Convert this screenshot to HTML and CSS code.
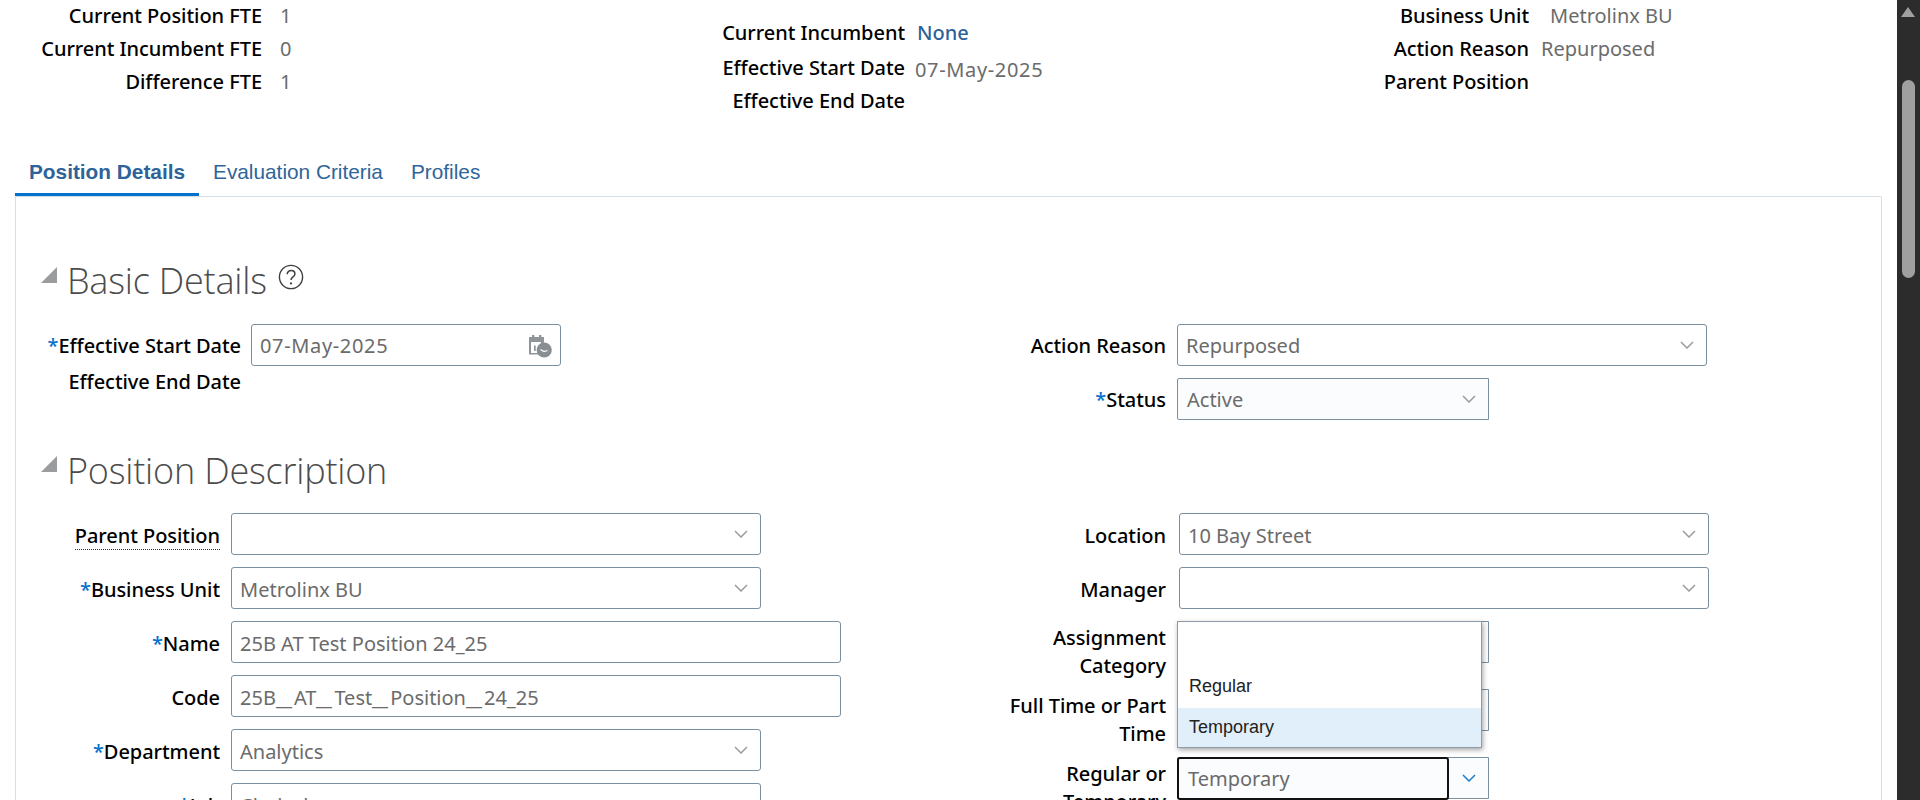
FILE: index.html
```html
<!DOCTYPE html>
<html lang="en">
  <head>
    <meta charset="UTF-8" />
    <title>Position Details</title>
    <link rel="stylesheet" href="styles.css">
  </head>
  <body>
    <svg class="defs" width="0" height="0">
      <symbol id="chevron" viewBox="0 0 14 8">
        <path d="M1 1l6 6 6-6" fill="none" stroke="currentColor" stroke-width="1.5" />
      </symbol>
      <symbol id="collapse" viewBox="0 0 16 16">
        <path d="M16 0v16H0z" fill="#9a9c9e" />
      </symbol>
    </svg>
    <div class="app">
      <div class="main">
        <div class="summary">
          <div class="summary-col col-fte">
            <div class="sum-row"><span class="sum-label">Current Position FTE</span><span class="sum-value">1</span></div>
            <div class="sum-row"><span class="sum-label">Current Incumbent FTE</span><span class="sum-value">0</span></div>
            <div class="sum-row"><span class="sum-label">Difference FTE</span><span class="sum-value">1</span></div>
          </div>
          <div class="summary-col col-dates">
            <div class="sum-row"><span class="sum-label">Current Incumbent</span><a class="sum-link" href="#">None</a></div>
            <div class="sum-row row-date"><span class="sum-label">Effective Start Date</span><span class="sum-value date-value">07-May-2025</span></div>
            <div class="sum-row"><span class="sum-label">Effective End Date</span></div>
          </div>
          <div class="summary-col col-unit">
            <div class="sum-row"><span class="sum-label">Business Unit</span><span class="sum-value unit-value">Metrolinx BU</span></div>
            <div class="sum-row"><span class="sum-label">Action Reason</span><span class="sum-value">Repurposed</span></div>
            <div class="sum-row"><span class="sum-label">Parent Position</span></div>
          </div>
        </div>

        <div class="tabs">
          <a class="tab active" href="#">Position Details</a>
          <a class="tab" href="#">Evaluation Criteria</a>
          <a class="tab" href="#">Profiles</a>
        </div>

        <div class="panel">
          <div class="section-head">
            <svg class="collapse"><use href="#collapse" /></svg>
            <h2>Basic Details</h2>
            <svg class="help" viewBox="0 0 26 26">
              <circle cx="13" cy="13" r="11.6" fill="none" stroke="#3f3f3f" stroke-width="1.4" />
              <path d="M9.2 10.2c0-2.2 1.7-3.6 3.9-3.6s3.8 1.3 3.8 3.3c0 3-3.9 3-3.9 6.2" fill="none" stroke="#3f3f3f" stroke-width="1.5" />
              <circle cx="13" cy="19.4" r="1.1" fill="#3f3f3f" />
            </svg>
          </div>
          <div class="form basic-form">
            <div class="form-col">
              <div class="row">
                <label class="label basic-label"><span class="req">*</span>Effective Start Date</label>
                <div class="field date-field">
                  <span class="field-text date-text">07-May-2025</span>
                  <svg class="cal" viewBox="0 0 26 24">
                    <path d="M3 3h15v5.5a8.5 8.5 0 0 0-5 12H3z" fill="#8f9499" />
                    <path d="M5 8h10v1.5a8.5 8.5 0 0 0-3.500 9.500H5z" fill="#fff" />
                    <path d="M6 1h2.400v4H6zM13 1h2.400v4H13z" fill="#8f9499" />
                    <path d="M8 11.500h1.700v5.500H8z" fill="#8f9499" />
                    <circle cx="18.200" cy="16" r="7.600" fill="#898e92" />
                    <path d="M14.500 15.500l3.500 2 3.500-1" fill="none" stroke="#fff" stroke-width="1.200" />
                  </svg>
                </div>
              </div>
              <div class="row row-plain">
                <label class="label basic-label">Effective End Date</label>
              </div>
            </div>
            <div class="form-col">
              <div class="row">
                <label class="label">Action Reason</label>
                <div class="field select wide">
                  <span class="field-text">Repurposed</span>
                  <span class="arrow"><svg class="chev"><use href="#chevron" /></svg></span>
                </div>
              </div>
              <div class="row">
                <label class="label"><span class="req">*</span>Status</label>
                <div class="field select short">
                  <span class="field-text">Active</span>
                  <span class="arrow"><svg class="chev"><use href="#chevron" /></svg></span>
                </div>
              </div>
            </div>
          </div>

          <div class="section-head second">
            <svg class="collapse"><use href="#collapse" /></svg>
            <h2>Position Description</h2>
          </div>
          <div class="form desc-form">
            <div class="form-col">
              <div class="row">
                <label class="label left-label"><span class="dotted">Parent Position</span></label>
                <div class="field select wide">
                  <span class="field-text"></span>
                  <span class="arrow"><svg class="chev"><use href="#chevron" /></svg></span>
                </div>
              </div>
              <div class="row">
                <label class="label left-label"><span class="req">*</span>Business Unit</label>
                <div class="field select wide">
                  <span class="field-text">Metrolinx BU</span>
                  <span class="arrow"><svg class="chev"><use href="#chevron" /></svg></span>
                </div>
              </div>
              <div class="row">
                <label class="label left-label"><span class="req">*</span>Name</label>
                <div class="field text-wide"><span class="field-text">25B AT Test Position 24_25</span></div>
              </div>
              <div class="row">
                <label class="label left-label">Code</label>
                <div class="field text-wide"><span class="field-text">25B<span class="gap">_</span>AT<span class="gap">_</span>Test<span class="gap">_</span>Position<span class="gap">_</span>24_25</span></div>
              </div>
              <div class="row">
                <label class="label left-label"><span class="req">*</span>Department</label>
                <div class="field select wide">
                  <span class="field-text">Analytics</span>
                  <span class="arrow"><svg class="chev"><use href="#chevron" /></svg></span>
                </div>
              </div>
              <div class="row">
                <label class="label left-label"><span class="req">*</span>Job</label>
                <div class="field select wide">
                  <span class="field-text">Clerical</span>
                  <span class="arrow"><svg class="chev"><use href="#chevron" /></svg></span>
                </div>
              </div>
            </div>
            <div class="form-col">
              <div class="row">
                <label class="label">Location</label>
                <div class="field select wide shifted">
                  <span class="field-text">10 Bay Street</span>
                  <span class="arrow"><svg class="chev"><use href="#chevron" /></svg></span>
                </div>
              </div>
              <div class="row">
                <label class="label">Manager</label>
                <div class="field select wide shifted">
                  <span class="field-text"></span>
                  <span class="arrow"><svg class="chev"><use href="#chevron" /></svg></span>
                </div>
              </div>
              <div class="row row-tall">
                <label class="label">Assignment Category</label>
                <div class="field select short"><span class="field-text"></span></div>
              </div>
              <div class="row row-tall">
                <label class="label">Full Time or Part Time</label>
                <div class="field select short"><span class="field-text"></span></div>
              </div>
              <div class="row row-tall row-open">
                <label class="label">Regular or Temporary</label>
                <div class="field select short open">
                  <span class="field-text focus-box">Temporary</span>
                  <span class="arrow"><svg class="chev"><use href="#chevron" /></svg></span>
                  <ul class="menu">
                    <li class="menu-item"></li>
                    <li class="menu-item">Regular</li>
                    <li class="menu-item hover">Temporary</li>
                  </ul>
                </div>
              </div>
            </div>
          </div>
        </div>
      </div>

      <div class="scrollbar">
        <span class="scroll-up"></span>
        <span class="scroll-thumb"></span>
      </div>
    </div>
  </body>
</html>
```

FILE: styles.css
```css
* {
  box-sizing: border-box;
}
html,
body {
  margin: 0;
  height: 800px;
  overflow: hidden;
}
body {
  background-color: #fff;
  color: #000;
  font-family: "Noto Sans", "Open Sans", sans-serif;
  font-size: 20px;
}
.defs {
  position: absolute;
}
.app {
  display: flex;
  height: 800px;
  overflow: hidden;
}
.main {
  flex: 1;
  min-width: 0;
  padding: 0 15px;
}

/* summary at the top */
.summary {
  display: flex;
  height: 171px;
}
.summary-col {
  display: flex;
  flex-direction: column;
}
.sum-row {
  display: flex;
  align-items: center;
  height: 33px;
}
.sum-label {
  text-align: right;
  flex-shrink: 0;
  font-weight: 500;
  letter-spacing: -0.05px;
}
.sum-value {
  color: #6b6b6b;
}
.sum-link {
  color: #2e6399;
  font-weight: 500;
  text-decoration: none;
}
.col-fte {
  width: 672px;
  margin-top: -1px;
}
.col-fte .sum-label {
  width: 247px;
  margin-right: 18px;
}
.col-dates {
  width: 687px;
  margin-top: 16px;
}
.col-dates .sum-label {
  width: 218px;
  margin-right: 12px;
}
.row-date {
  height: 37px;
}
.row-date .date-value {
  margin: 3px 0 0 -2px;
  letter-spacing: 0.65px;
}
.row-date + .sum-row {
  margin-top: -2px;
}
.col-unit {
  margin-top: -1px;
}
.col-unit .sum-label {
  width: 155px;
  margin-right: 12px;
}
.unit-value {
  margin-left: 9px;
}

/* tabs */
.tabs {
  display: flex;
  height: 26px;
  font-family: "Liberation Sans", Arial, sans-serif;
  font-size: 20.8px;
}
.tab {
  padding: 0 14px;
  height: 26px;
  color: #2f6599;
  text-decoration: none;
  line-height: 2px;
}
.tab.active {
  font-weight: 700;
  color: #2e6399;
  border-bottom: 4px solid #0572ce;
}

.panel {
  position: relative;
  height: 700px;
  margin-top: -1px;
  border: 1px solid #d6dfe8;
  border-bottom: 0;
  border-radius: 0 2px 0 0;
}

/* section headers */
.section-head {
  display: flex;
  align-items: center;
  height: 44px;
  margin-top: 61px;
  padding-left: 25px;
}
.section-head.second {
  margin-top: -1px;
}
.collapse {
  width: 16px;
  height: 16px;
  margin: -10px 10px 0 0;
  flex-shrink: 0;
}
.second .collapse {
  margin-top: -12px;
}
.section-head h2 {
  margin: 0;
  font-family: "Open Sans", sans-serif;
  font-size: 36px;
  font-weight: 300;
  letter-spacing: -0.2px;
  color: #4c4c4c;
}
.help {
  width: 26px;
  height: 26px;
  margin: -7px 0 0 11px;
}

/* forms */
.form {
  display: grid;
  grid-template-columns: 989px 1fr;
}
.basic-form {
  height: 147px;
  padding-top: 22px;
}
.desc-form {
  padding-top: 21px;
}
.form-col {
  min-width: 0;
}
.row {
  display: flex;
  align-items: center;
  height: 42px;
  margin-bottom: 12px;
}
.row-plain {
  height: 28px;
  margin: -11px 0 0;
}
.label {
  width: 161px;
  flex-shrink: 0;
  margin-right: 11px;
  text-align: right;
  font-weight: 500;
  letter-spacing: -0.05px;
  line-height: 28px;
  padding-top: 2px;
}
.desc-form .label {
  padding-top: 4px;
}
.row-tall {
  align-items: flex-start;
  margin-bottom: 26px;
}
.desc-form .row-tall .label {
  padding-top: 3px;
}
.basic-label {
  width: 225px;
  margin-right: 10px;
}
.left-label {
  width: 204px;
  margin-right: 11px;
}
.req {
  color: #0572ce;
}
.dotted {
  border-bottom: 1px dotted #333;
}
.field {
  position: relative;
  display: flex;
  align-items: center;
  height: 42px;
  padding-left: 8px;
  border: 1px solid #7a8fa0;
  border-radius: 3px;
  background-color: #fff;
  color: #6b6b6b;
}
.field-text {
  flex: 1;
  padding-top: 1px;
  white-space: nowrap;
}
.desc-form .field-text {
  padding-top: 3px;
}
.date-text {
  letter-spacing: 0.65px;
}
/* the underscores in the code field run wider than this font draws them */
.gap {
  display: inline-block;
  width: 18px;
  transform: scaleX(1.8);
  transform-origin: left;
}
.date-field {
  width: 310px;
  padding-right: 8px;
}
.cal {
  width: 26px;
  height: 24px;
  margin-top: 2px;
}
.wide {
  width: 530px;
}
.shifted {
  margin-left: 2px;
}
.text-wide {
  width: 610px;
}
.short {
  width: 312px;
  padding-left: 9px;
  border-radius: 2px 0 0 2px;
  background-color: #fbfcfe;
}
.arrow {
  display: flex;
  align-items: center;
  justify-content: center;
  width: 38px;
  height: 100%;
  color: #9b9b9b;
}
.chev {
  width: 14px;
  height: 8px;
  margin-top: -1px;
}

/* open list on Regular or Temporary */
.open {
  padding-left: 0;
}
.desc-form .focus-box {
  display: flex;
  align-items: center;
  height: 43px;
  margin: -1px 0 -1px -1px;
  padding: 1px 0 0 9px;
  border: 2px solid #111;
  border-radius: 3px;
}
.open .arrow {
  width: 39px;
  color: #1b7cc9;
}
.menu {
  position: absolute;
  left: -1px;
  bottom: 50px;
  width: 305px;
  margin: 0;
  padding: 0;
  list-style: none;
  background-color: #fff;
  border: 1px solid #8e9aa5;
  box-shadow: 1px 2px 5px rgba(0, 0, 0, 0.35);
  color: #222;
  font-family: "Liberation Sans", Arial, sans-serif;
  font-size: 18px;
}
.menu-item {
  height: 40px;
  padding-left: 11px;
  line-height: 36px;
}
.menu-item:first-child {
  height: 46px;
}
.menu-item.hover {
  height: 39px;
  line-height: 39px;
  background-color: #e1effb;
}

/* scrollbar */
.scrollbar {
  position: relative;
  width: 23px;
  flex-shrink: 0;
  background-color: #2c2c2c;
}
.scroll-up {
  position: absolute;
  top: 7px;
  left: 4px;
  width: 0;
  height: 0;
  border-left: 7.5px solid transparent;
  border-right: 7.5px solid transparent;
  border-bottom: 10px solid #a0a0a0;
}
.scroll-thumb {
  position: absolute;
  top: 80px;
  left: 5px;
  width: 13px;
  height: 198px;
  border-radius: 7px;
  background-color: #a0a0a0;
}
```
